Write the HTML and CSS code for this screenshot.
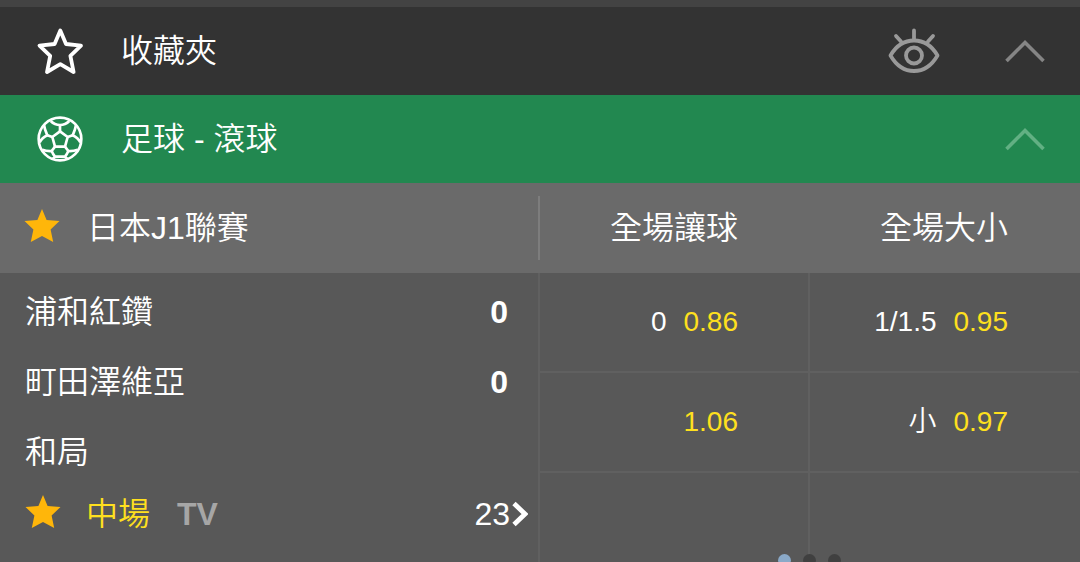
FILE: index.html
```html
<!DOCTYPE html>
<html lang="zh-Hant">
<head>
  <meta charset="UTF-8" />
  <meta name="viewport" content="width=device-width, initial-scale=1" />
  <title>足球 - 滾球</title>
  <link rel="stylesheet" href="styles.css">
</head>
<body>
  <div class="bar favorites">
    <svg class="bar-icon" viewBox="0 0 48 48" fill="none" stroke="#fff" stroke-width="3.8" stroke-linejoin="round">
      <path d="M24.3 3.5 L30 17 L45 18.6 L34.4 28.8 L37.6 45 L24.3 37.2 L11 45 L14.2 28.8 L3.5 18.6 L18.6 17 Z" />
    </svg>
    <h2>收藏夾</h2>
    <button class="icon-btn" aria-label="顯示">
      <svg class="eye" viewBox="0 0 52 48" fill="none" stroke="#999" stroke-width="3.8" stroke-linecap="round" stroke-linejoin="round">
        <path d="M2.5 28.5 C8 19 16 13.5 26 13.5 S44 19 49.5 28.5 C44 38 36 44 26 44 S8 38 2.5 28.5 Z" />
        <circle cx="26" cy="28.5" r="8" />
        <path d="M26 3.5 V13 M8 9 L13 14.5 M45 9 L40 14.5" />
      </svg>
    </button>
    <button class="icon-btn" aria-label="收起收藏夾">
      <svg class="chevron" viewBox="0 0 40 24" fill="none" stroke="#858585" stroke-width="3.6">
        <path d="M1.5 22 L20 3.5 L38.5 22" />
      </svg>
    </button>
  </div>

  <div class="bar sport">
    <svg class="bar-icon" viewBox="34 30 144 144" fill="none" stroke="#fff" stroke-width="8" stroke-linejoin="round">
      <circle cx="106" cy="102" r="64" />
      <path d="M106 79 L129 96 L121 125 H91 L83 96 Z" />
      <path d="M106 79 V60 M129 96 L144 91 M121 125 L131 138 M91 125 L81 138 M83 96 L68 91" />
      <path d="M78 48 Q90 60 106 60 Q122 60 134 48" />
      <path d="M154 60 Q152 74 144 91 Q160 98 167 112 M58 60 Q60 74 68 91 Q52 98 45 112" />
      <path d="M159 134 Q146 139 131 138 Q127 148 121 155 L128 162 M53 134 Q66 139 81 138 Q85 148 91 155 L84 162 M91 155 H121" />
    </svg>
    <h2>足球 - 滾球</h2>
    <button class="icon-btn" aria-label="收起足球">
      <svg class="chevron" viewBox="0 0 40 24" fill="none" stroke="#62b083" stroke-width="3.6">
        <path d="M1.5 22 L20 3.5 L38.5 22" />
      </svg>
    </button>
  </div>

  <div class="match-wrap">
    <table class="matches">
      <thead>
        <tr>
          <th class="col-league" scope="col">
            <div class="league">
              <button class="icon-btn" aria-label="收藏聯賽">
                <svg class="star" viewBox="0 0 36 38" fill="#ffb60a">
                  <path d="M18 0 L22.6 11 L35.5 12 L26.6 20.5 L29.2 33 L18 27 L6.8 33 L9.4 20.5 L0.5 12 L13.4 11 Z" />
                </svg>
              </button>
              <span>日本J1聯賽</span>
            </div>
          </th>
          <th class="col-odds" scope="col">全場讓球</th>
          <th class="col-odds" scope="col">全場大小</th>
        </tr>
      </thead>
      <tbody>
        <tr>
          <td class="match" rowspan="3">
            <div class="team"><span>浦和紅鑽</span><span class="score">0</span></div>
            <div class="team"><span>町田澤維亞</span><span class="score">0</span></div>
            <div class="team"><span>和局</span></div>
            <div class="info">
              <button class="icon-btn" aria-label="收藏賽事">
                <svg class="star" viewBox="0 0 36 38" fill="#ffb60a">
                  <path d="M18 0 L22.6 11 L35.5 12 L26.6 20.5 L29.2 33 L18 27 L6.8 33 L9.4 20.5 L0.5 12 L13.4 11 Z" />
                </svg>
              </button>
              <span class="period">中場</span>
              <span class="tv">TV</span>
              <a class="more" href="#">23<svg viewBox="0 0 16 26" fill="none" stroke="#fff" stroke-width="4.8">
                <path d="M2 2.5 L13 13 L2 23.5" />
              </svg></a>
            </div>
          </td>
          <td class="odds"><span>0</span><button class="price">0.86</button></td>
          <td class="odds"><span>1/1.5</span><button class="price">0.95</button></td>
        </tr>
        <tr>
          <td class="odds"><button class="price">1.06</button></td>
          <td class="odds"><span>小</span><button class="price">0.97</button></td>
        </tr>
        <tr>
          <td class="odds"></td>
          <td class="odds"></td>
        </tr>
      </tbody>
    </table>
    <div class="pager">
      <span class="dot active"></span>
      <span class="dot"></span>
      <span class="dot"></span>
    </div>
  </div>
</body>
</html>
```
FILE: styles.css
```css
* {
  box-sizing: border-box;
}

body {
  margin: 0;
  border-top: 7px solid #434343;
  background: #585858;
  color: #fff;
  font-family: "Liberation Sans", "Noto Sans CJK TC", sans-serif;
  font-size: 32px;
  font-weight: 350;
  line-height: 40px;
  overflow: hidden;
}

button {
  padding: 0;
  border: 0;
  background: none;
  color: inherit;
  font: inherit;
  cursor: pointer;
}

svg {
  display: block;
}

/* section bars */
.bar {
  display: flex;
  align-items: center;
  height: 88px;
  padding: 0 35px 0 36px;
}

.bar h2 {
  flex: 1;
  margin: 0 0 0 37px;
  font-size: 32px;
  font-weight: 350;
}

.favorites {
  background: #333;
}

.sport {
  background: #228850;
}

.bar-icon {
  width: 48px;
  height: 48px;
}

.eye {
  width: 52px;
  height: 48px;
}

.chevron {
  width: 40px;
  height: 24px;
  margin-left: 65px;
}

.star {
  width: 36px;
  height: 38px;
}

/* match table */
.match-wrap {
  position: relative;
}

.matches {
  width: 100%;
  table-layout: fixed;
  border-collapse: separate;
  border-spacing: 0;
}

.matches th {
  height: 90px;
  padding: 0;
  background: #6a6a6a;
  font-weight: 350;
}

.col-league {
  width: 50%;
}

.matches .col-odds {
  padding-right: 72px;
  text-align: right;
}

.league {
  display: flex;
  align-items: center;
  gap: 27px;
  height: 64px;
  padding-left: 24px;
  border-right: 2px solid #7d7d7d;
}

.match {
  padding: 4px 0 0;
  border-right: 2px solid #606060;
  vertical-align: top;
}

.team {
  display: flex;
  justify-content: space-between;
  height: 70px;
  padding: 0 30px 0 25px;
  line-height: 70px;
}

.score {
  font-weight: bold;
}

.info {
  display: flex;
  align-items: center;
  height: 54px;
  padding: 0 10px 0 25px;
}

.period {
  margin: 0 27px 0 25px;
  color: #ffe01e;
}

.tv {
  color: #a6a6a6;
  font-weight: bold;
}

.more {
  display: flex;
  align-items: center;
  margin-left: auto;
  color: #fff;
  text-decoration: none;
}

.more svg {
  width: 16px;
  height: 26px;
  margin-left: 2px;
}

.odds {
  height: 100px;
  padding: 0 70px 0 0;
  border-right: 2px solid #606060;
  border-bottom: 2px solid #606060;
  font-size: 28px;
  text-align: right;
}

.odds:last-child {
  border-right-color: transparent;
}

.price {
  margin-left: 17px;
  color: #ffe01e;
}

/* page dots over the odds columns */
.pager {
  position: absolute;
  right: 0;
  bottom: 6px;
  display: flex;
  justify-content: center;
  gap: 12px;
  width: 50%;
  padding-right: 2px;
}

.dot {
  width: 13px;
  height: 13px;
  border-radius: 50%;
  background: #404040;
}

.dot.active {
  background: #8aa9c8;
}
```
